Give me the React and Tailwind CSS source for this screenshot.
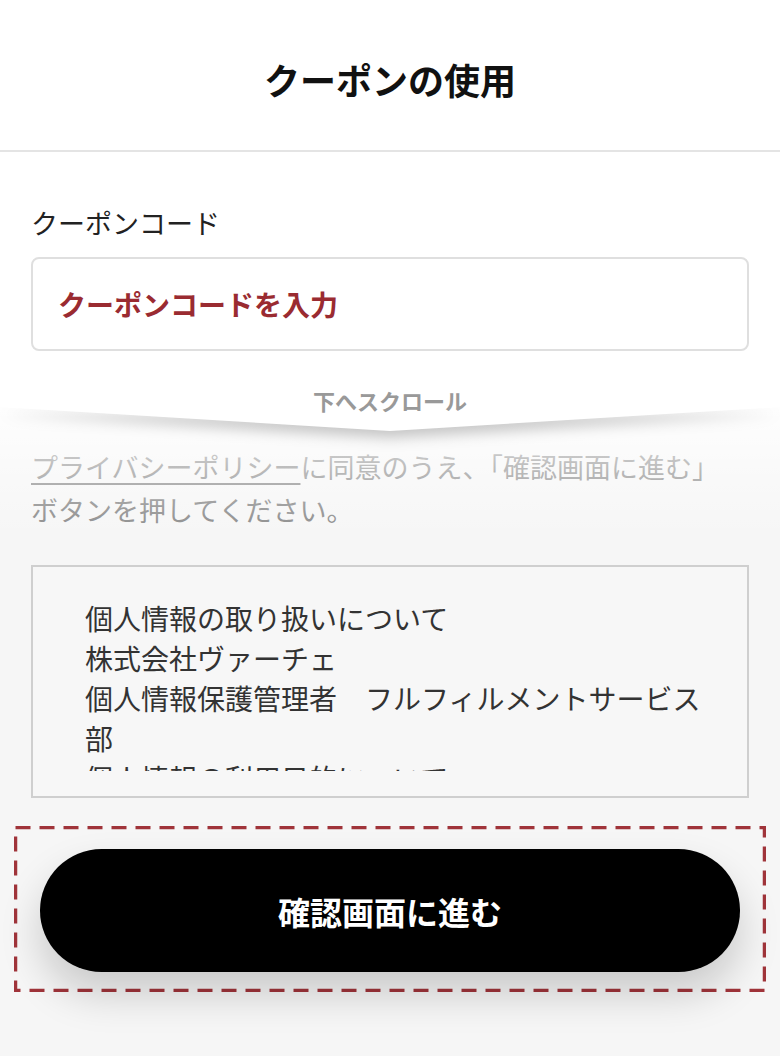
export default function App() {
  const font = { fontFamily: '"Noto Sans CJK JP", "Noto Sans", sans-serif' };

  return (
    <div className="w-[780px] h-[1056px] overflow-hidden bg-[#f6f6f6] flex flex-col" style={font}>
      {/* Header */}
      <header className="h-[152px] shrink-0 bg-white border-b-2 border-[#e4e4e4] flex items-center justify-center pt-[8px]">
        <h1 className="text-[36px] font-bold text-[#111] leading-none">クーポンの使用</h1>
      </header>

      {/* Coupon form */}
      <section className="bg-white px-[31px] pt-[51px] shrink-0 relative z-20">
        <label className="block text-[27px] leading-[40px] text-[#222]">クーポンコード</label>
        <div className="mt-[14px] h-[94px] rounded-[8px] border-2 border-[#dfdfdf] flex items-center pl-[25px]">
          <span className="text-[28px] font-bold text-[#9a2b31]">クーポンコードを入力</span>
        </div>
        <p className="mt-[42px] text-center text-[22px] font-bold leading-[14px] text-[#999]">下へスクロール</p>
      </section>

      {/* Scrolled content */}
      <section className="relative flex-1 px-[31px] pt-[38px]">
        <div className="absolute inset-x-0 top-0 h-[130px] bg-gradient-to-b from-white/90 via-white/40 to-transparent pointer-events-none" />
        <svg
          className="absolute left-0 top-0 z-10 drop-shadow-[0_7px_7px_rgba(0,0,0,0.22)]"
          width="780"
          height="26"
          viewBox="0 0 780 26"
        >
          <polygon points="0,0 780,0 390,24" fill="#ffffff" />
        </svg>

        <p className="text-[27px] leading-[43px] text-[#8a8a8a]">
          <span className="underline underline-offset-[5px]">プライバシーポリシー</span>に同意のうえ、「確認画面に進む」
          <br />
          ボタンを押してください。
        </p>

        <div className="relative mt-[34px] border-2 border-[#cfcfcf] bg-[#f7f7f7] pt-[31px] pb-[25px] pl-[52px] pr-[40px]">
          <div className="h-[173px] overflow-hidden text-[28px] leading-[40px] text-[#333]">
            <p>個人情報の取り扱いについて</p>
            <p>株式会社ヴァーチェ</p>
            <p>個人情報保護管理者　フルフィルメントサービス部</p>
            <p>個人情報の利用目的について</p>
          </div>
        </div>

        <div className="relative mt-[28px] -mx-[17px] pt-[23px] pb-[20px] px-[26px]">
          <svg className="absolute inset-0 pointer-events-none" width="100%" height="100%">
            <rect
              x="1.5"
              y="1.5"
              fill="none"
              stroke="#a0343a"
              strokeWidth="3.5"
              strokeDasharray="15 9"
              style={{ width: "calc(100% - 3px)", height: "calc(100% - 3px)" }}
            />
          </svg>
          <button className="relative w-full h-[123px] rounded-full bg-black text-white text-[32px] font-bold shadow-[0_22px_40px_rgba(0,0,0,0.18)]">
            確認画面に進む
          </button>
        </div>
      </section>
    </div>
  );
}
